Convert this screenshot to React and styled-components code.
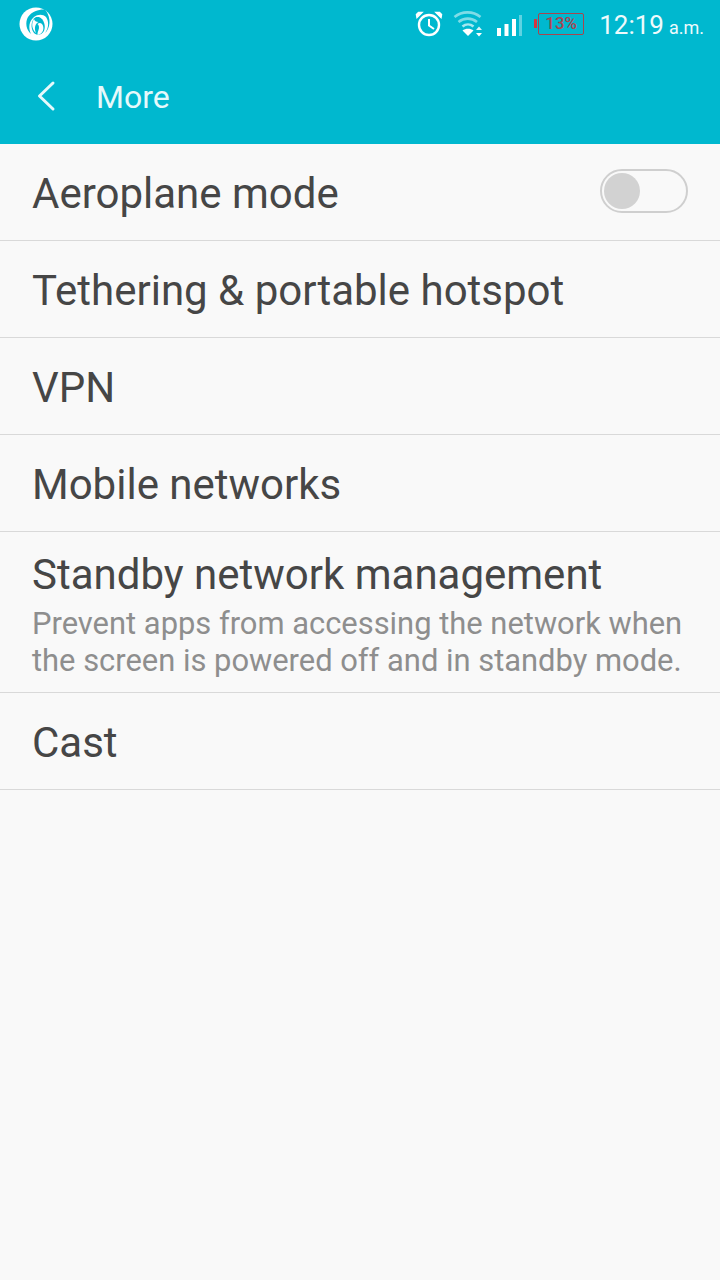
import React from "react";
import styled, { createGlobalStyle } from "styled-components";

const GlobalStyle = createGlobalStyle`
  html, body {
    margin: 0;
    padding: 0;
    background: #f9f9f9;
  }
  body {
    font-family: Roboto, "Liberation Sans", sans-serif;
  }
`;

const Page = styled.div`
  width: 720px;
  height: 1280px;
  background: #f9f9f9;
  overflow: hidden;
`;

const Header = styled.header`
  height: 144px;
  background: #00b8cf;
  color: #fff;
`;

const StatusBar = styled.div`
  height: 48px;
  display: flex;
  align-items: center;
  padding: 0 16px 0 18px;
  box-sizing: border-box;
`;

const StatusIcons = styled.div`
  margin-left: auto;
  display: flex;
  align-items: center;
`;

const Clock = styled.span`
  margin: 2px 0 0 15px;
  font-size: 26px;
  color: #eefafc;
  white-space: nowrap;
`;

const Meridiem = styled.span`
  margin-left: 5px;
  font-size: 18px;
`;

const Battery = styled.div`
  position: relative;
  margin-left: 16px;
  width: 46px;
  height: 22px;
  box-sizing: border-box;
  border: 1.5px solid #a8454f;
  border-radius: 2px;
  color: #a8454f;
  font-size: 17px;
  font-weight: 500;
  line-height: 19px;
  text-align: center;

  &::before {
    content: "";
    position: absolute;
    left: -5px;
    top: 5px;
    width: 3px;
    height: 9px;
    background: #d9343f;
  }
`;

const Toolbar = styled.div`
  height: 96px;
  display: flex;
  align-items: center;
  padding-left: 36px;
  box-sizing: border-box;
`;

const ToolbarTitle = styled.div`
  margin: 2px 0 0 40px;
  font-size: 32px;
  color: #e6f9fb;
`;

const Row = styled.div`
  height: ${(p) => (p.tall ? 161 : 97)}px;
  box-sizing: border-box;
  border-bottom: 1px solid #d9d9d9;
  padding: ${(p) => (p.tall ? 0 : 4)}px 32px 0;
  display: flex;
  align-items: center;
  justify-content: space-between;
`;

const RowText = styled.div`
  display: flex;
  flex-direction: column;
`;

const Title = styled.div`
  font-size: 42px;
  line-height: 48px;
  color: #464646;
  white-space: nowrap;
`;

const Summary = styled.div`
  font-size: 30.9px;
  line-height: 37px;
  color: #8e8e8e;
  white-space: nowrap;
`;

const SummaryBlock = styled.div`
  margin-top: 6px;
  margin-bottom: -6px;
`;

const Switch = styled.div`
  width: 88px;
  height: 44px;
  box-sizing: border-box;
  border: 2px solid #cfcfcf;
  border-radius: 22px;
  padding: 2px;
  margin-top: -6px;
`;

const Knob = styled.div`
  width: 36px;
  height: 36px;
  border-radius: 50%;
  background: #d2d2d2;
`;

const Logo = () => (
  <svg width="36" height="36" viewBox="0 0 36 36">
    <circle cx="18" cy="18" r="16.5" fill="#fff" />
    <path d="M27 3.500C22 3 14 5 10 11C7 16 8 24 13 28C10 22 11 15 16 11C20 8 25 8 28 11C31 15 31 22 27 27C32 23 34 12 27 3.500Z" fill="#00b8cf" />
    <path d="M18 11C13 14 12 22 16 27C19 30 24 29 26 25C28 20 26 13 21 11Z" fill="#00b8cf" />
    <path d="M16 13C13 17 14 24 18 27C16 22 17 18 20.500 16C18 16 16.500 15 16 13Z" fill="#fff" />
    <path d="M19.500 29C25 28 27 22 24 18C22.500 16.500 21 16.500 19.500 18C21 19 21.500 21.500 20.500 24C19.800 25.500 19.500 27 19.500 29Z" fill="#fff" />
  </svg>
);

const AlarmIcon = () => (
  <svg width="28" height="26" viewBox="0 0 28 26" fill="none" stroke="#fff">
    <circle cx="14" cy="14" r="10" strokeWidth="2.400" />
    <path d="M14 8v6.500l5 3.500" strokeWidth="2" />
    <path d="M2 6.500 7 1.500 3.500 1.500 1.500 3.500z M26 6.500 21 1.500 24.500 1.500 26.500 3.500z" fill="#fff" strokeWidth="1.500" />
  </svg>
);

const WifiIcon = () => (
  <svg width="30" height="28" viewBox="0 0 30 28" fill="none" style={{ marginLeft: 10 }}>
    <path d="M1.500 7C9 .8 20 .8 27.500 7" stroke="#7fdce7" strokeWidth="2.600" />
    <path d="M5.500 12c5.500-4.500 13-4.500 18.500 0" stroke="#7fdce7" strokeWidth="2.600" />
    <path d="M9.500 16.500c3.200-2.600 7.800-2.600 11 0" stroke="#a5e8f0" strokeWidth="2.600" />
    <path d="M9.500 20.500c3-2.400 8-2.400 11 0L15 26z" fill="#fff" />
    <path d="M23 20l3-3.500 3 3.500z" fill="#d9f5f8" />
    <path d="M23 23l3 3.500 3-3.500z" fill="#fff" />
  </svg>
);

const SignalIcon = () => (
  <svg width="26" height="22" viewBox="0 0 26 22" style={{ marginLeft: 13, marginTop: 4 }}>
    <rect x="1" y="13" width="4" height="8" fill="#fff" />
    <rect x="8.500" y="9" width="4" height="12" fill="#fff" />
    <rect x="16" y="4" width="4" height="17" fill="#fff" />
    <rect x="23" y="0" width="3" height="21" fill="#5fd3e2" />
  </svg>
);

const BackIcon = () => (
  <svg width="20" height="32" viewBox="0 0 20 32" fill="none">
    <path d="M17 3 3.500 16 17 29" stroke="#e6f9fb" strokeWidth="3" strokeLinecap="round" strokeLinejoin="round" />
  </svg>
);

export default function App() {
  return (
    <Page>
      <GlobalStyle />
      <Header>
        <StatusBar>
          <Logo />
          <StatusIcons>
            <AlarmIcon />
            <WifiIcon />
            <SignalIcon />
            <Battery>13%</Battery>
            <Clock>
              12:19<Meridiem>a.m.</Meridiem>
            </Clock>
          </StatusIcons>
        </StatusBar>
        <Toolbar>
          <BackIcon />
          <ToolbarTitle>More</ToolbarTitle>
        </Toolbar>
      </Header>
      <Row>
        <Title>Aeroplane mode</Title>
        <Switch>
          <Knob />
        </Switch>
      </Row>
      <Row>
        <Title>Tethering &amp; portable hotspot</Title>
      </Row>
      <Row>
        <Title>VPN</Title>
      </Row>
      <Row>
        <Title>Mobile networks</Title>
      </Row>
      <Row tall>
        <RowText>
          <Title>Standby network management</Title>
          <SummaryBlock>
            <Summary>Prevent apps from accessing the network when</Summary>
            <Summary>the screen is powered off and in standby mode.</Summary>
          </SummaryBlock>
        </RowText>
      </Row>
      <Row>
        <Title>Cast</Title>
      </Row>
    </Page>
  );
}
